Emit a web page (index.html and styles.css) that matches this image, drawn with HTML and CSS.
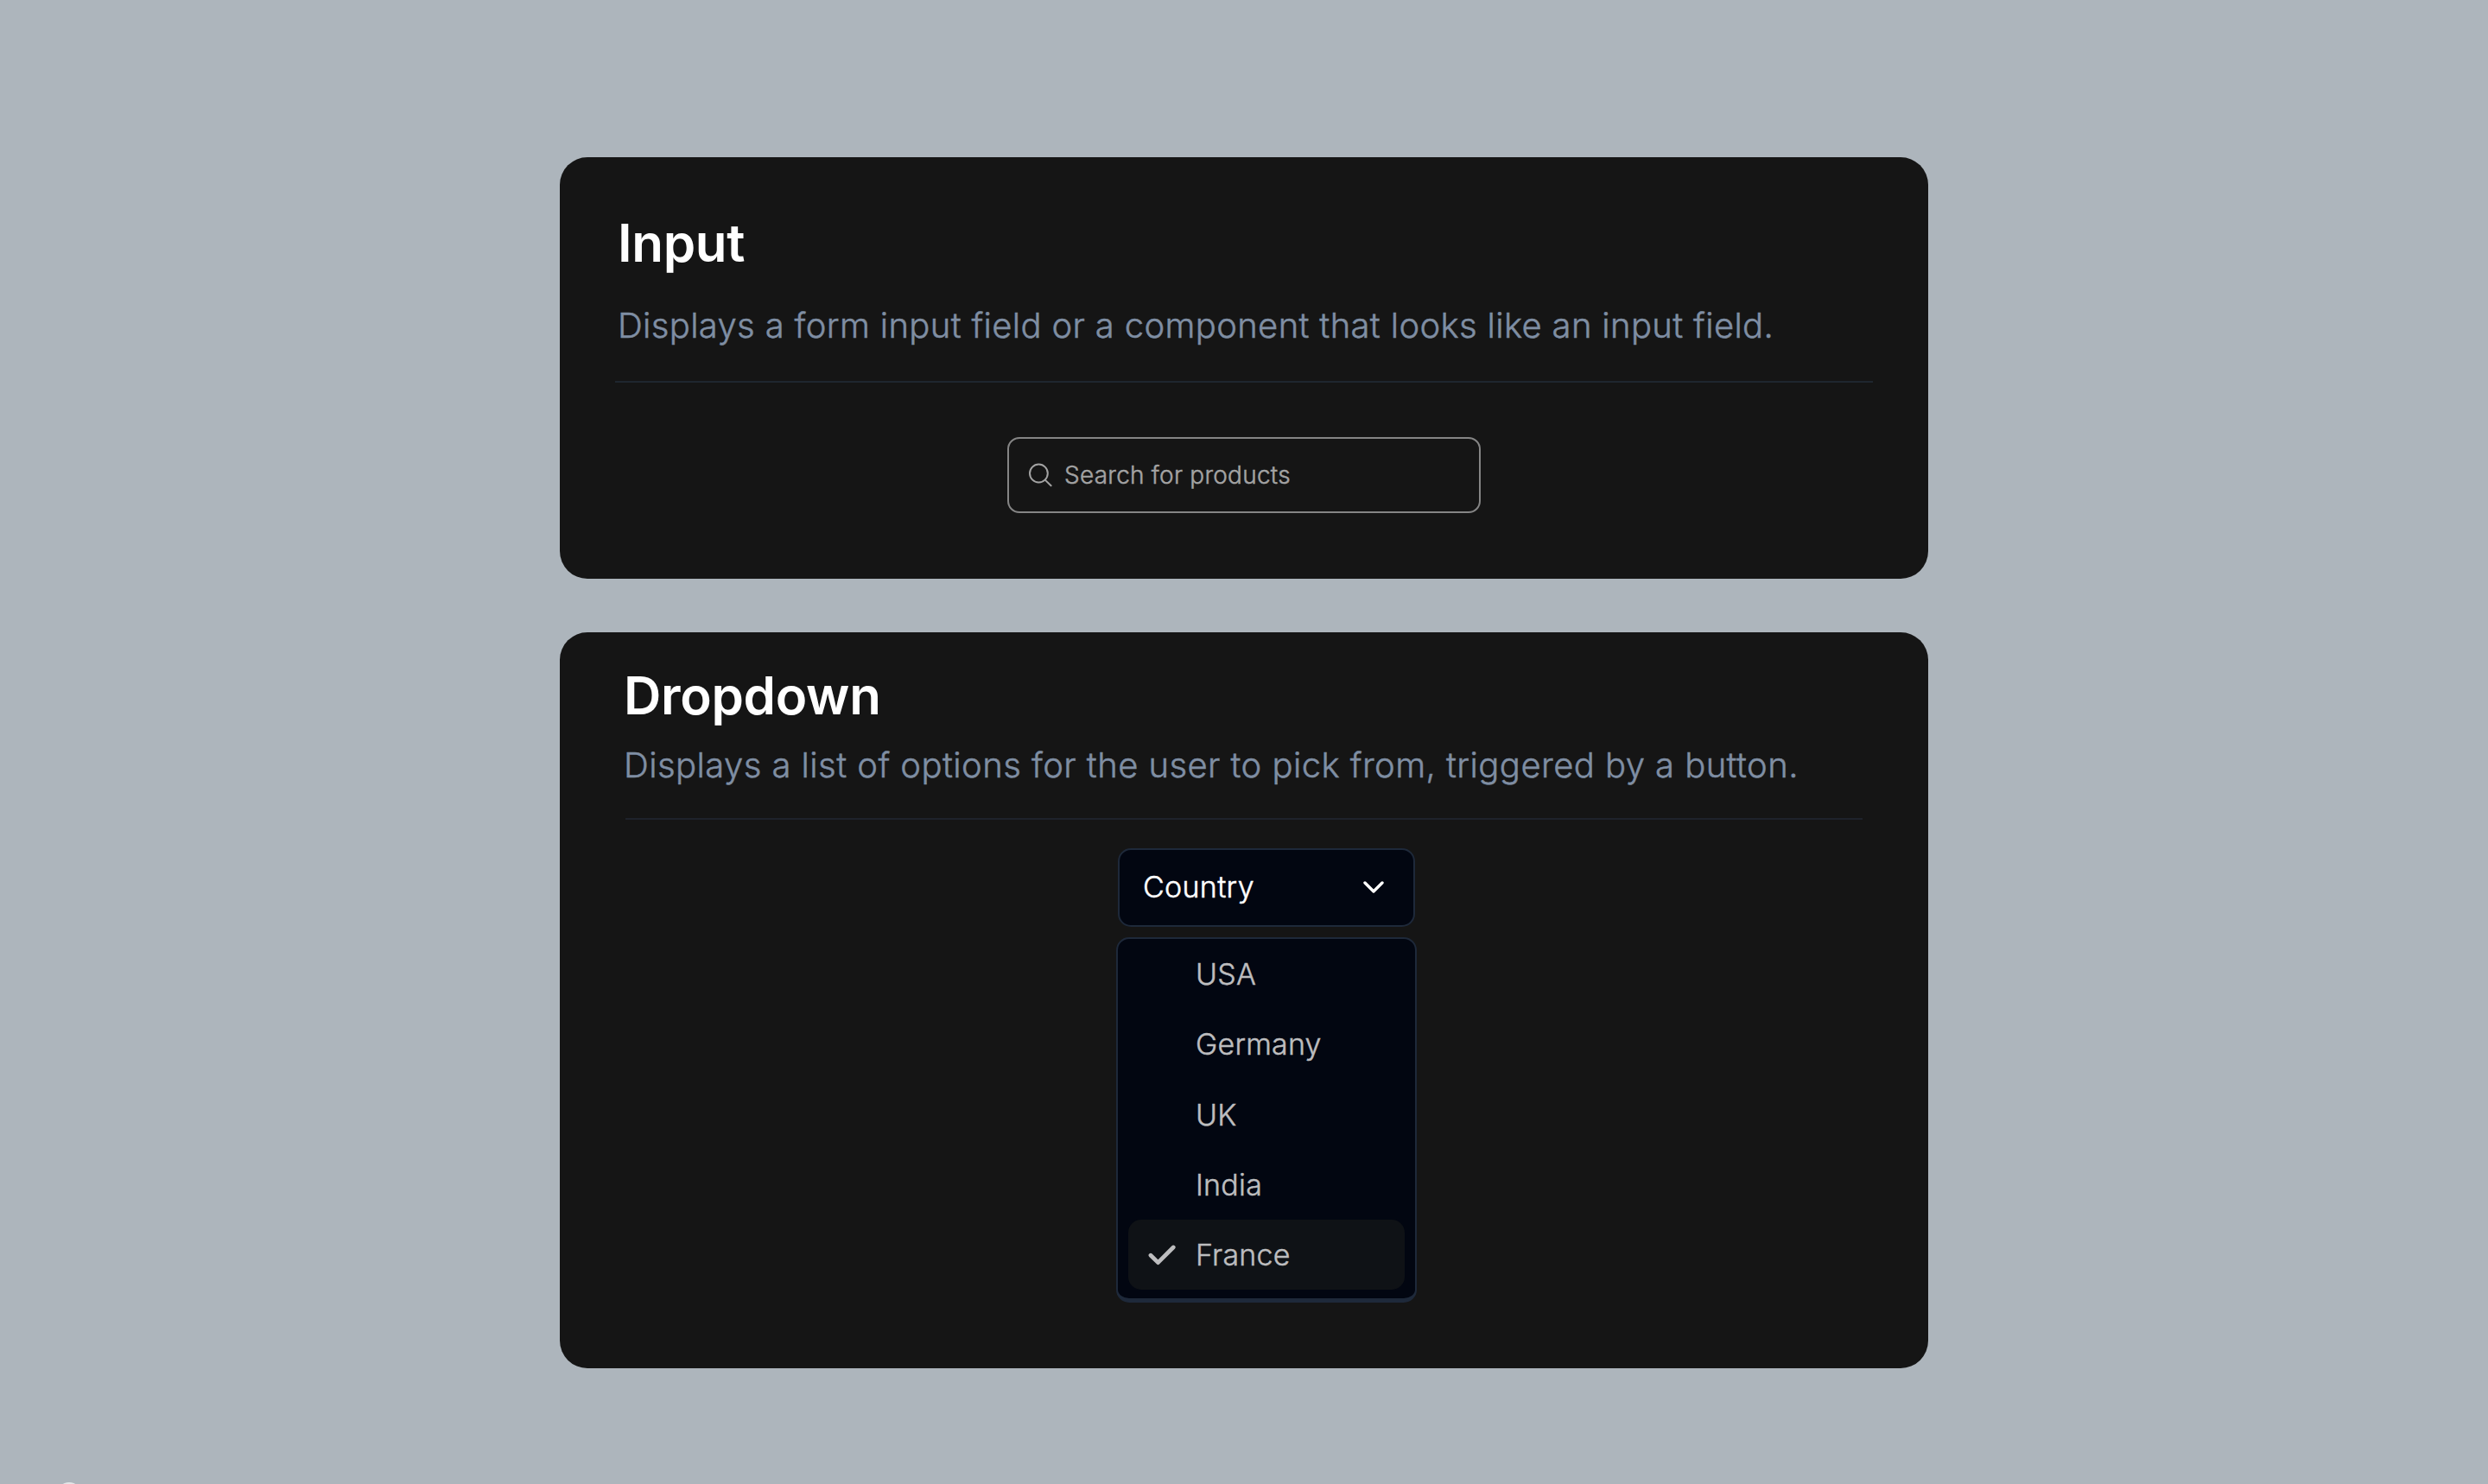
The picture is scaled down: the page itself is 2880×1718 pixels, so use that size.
FILE: index.html
```html
<!DOCTYPE html>
<html lang="en">

<head>
  <meta charset="UTF-8">
  <meta name="viewport" content="width=device-width, initial-scale=1.0">
  <title>Components</title>
  <link rel="stylesheet" href="styles.css">
</head>

<body>
  <div class="container">
    <section class="card card-input">
      <h2>Input</h2>
      <p>Displays a form input field or a component that looks like an input field.</p>
      <hr>
      <label class="search">
        <svg class="search-icon" viewBox="0 0 28 28" fill="none" stroke="currentColor" stroke-width="2" stroke-linecap="round">
          <circle cx="12.4" cy="12" r="10.4" />
          <path d="M19.8 19.6L26.6 26.2" />
        </svg>
        <input type="text" placeholder="Search for products">
      </label>
    </section>

    <section class="card card-dropdown">
      <h2>Dropdown</h2>
      <p>Displays a list of options for the user to pick from, triggered by a button.</p>
      <hr>
      <div class="dropdown">
        <button type="button" class="trigger">
          <span>Country</span>
          <svg class="chevron" viewBox="0 0 24 14" fill="none" stroke="currentColor" stroke-width="3.4" stroke-linecap="round" stroke-linejoin="round">
            <path d="M2 2L12 12L22 2" />
          </svg>
        </button>
        <ul class="menu">
          <li>USA</li>
          <li>Germany</li>
          <li>UK</li>
          <li>India</li>
          <li class="selected">
            <svg class="check" viewBox="0 0 32 24" fill="none" stroke="currentColor" stroke-width="4.8" stroke-linecap="round" stroke-linejoin="round">
              <path d="M3 12.2L11.5 20.6L29.2 3" />
            </svg>
            France
          </li>
        </ul>
      </div>
    </section>
  </div>
  <span class="dot"></span>
</body>

</html>
```
FILE: styles.css
```css
* {
  box-sizing: border-box;
  margin: 0;
  padding: 0;
}

body {
  background-color: #adb5bc;
  font-family: Inter, sans-serif;
  height: 1718px;
  overflow: hidden;
}

.container {
  width: 1584px;
  margin: 0 auto;
  padding-top: 182px;
  display: flex;
  flex-direction: column;
  gap: 62px;
}

.card {
  background-color: #151515;
  border-radius: 32px;
}

.card-input {
  height: 488px;
  padding: 63px 64px 0;
}

.card-dropdown {
  height: 852px;
  padding: 37px 76px 0;
}

h2 {
  color: #fff;
  font-size: 60px;
  font-weight: 600;
  line-height: 72px;
  letter-spacing: -0.3px;
}

/* light weight, slightly thickened */
p,
.search input,
.trigger,
.menu {
  -webkit-text-stroke: 0.5px;
}

p {
  color: #7f8ea3;
  font-size: 40px;
  font-weight: 300;
  line-height: 56px;
  letter-spacing: 0.34px;
  white-space: nowrap;
}

hr {
  border: 0;
  height: 2px;
  background-color: #1f262f;
}

.card-input h2,
.card-input p {
  padding-left: 3px;
}

.card-input p {
  margin-top: 32px;
}

.card-input hr {
  margin-top: 36px;
}

.card-dropdown h2,
.card-dropdown p {
  margin-left: -2px;
}

.card-dropdown p {
  margin-top: 17px;
  letter-spacing: 0.43px;
}

.card-dropdown hr {
  margin-top: 33px;
  background-color: #1e222b;
}

.search {
  display: flex;
  align-items: center;
  gap: 14px;
  width: 548px;
  height: 88px;
  margin: 63px auto 0;
  padding: 0 22px;
  border: 2px solid #858585;
  border-radius: 14px;
  color: #a3a3a3;
}

.search-icon {
  width: 28px;
  height: 28px;
}

.search input {
  flex: 1;
  min-width: 0;
  border: 0;
  outline: 0;
  background: none;
  color: inherit;
  font: 300 28px Inter, sans-serif;
  letter-spacing: 0.24px;
}

.search input::placeholder {
  color: #a3a3a3;
  opacity: 1;
}

.dropdown {
  width: 348px;
  margin: 33px 0 0 568px;
}

.trigger {
  display: flex;
  align-items: center;
  justify-content: space-between;
  width: 344px;
  height: 91px;
  margin: 0 auto;
  padding: 0 34px 2px 27px;
  background-color: #020611;
  border: 2px solid #1e293a;
  border-radius: 15px;
  color: #fff;
  font: 300 34px Inter, sans-serif;
  letter-spacing: 0.3px;
}

.chevron {
  width: 24px;
  height: 14px;
}

.menu {
  height: 423px;
  margin-top: 12px;
  padding: 0 10px;
  background-color: #020611;
  border: 2px solid #1e293a;
  border-bottom-width: 5px;
  border-radius: 15px;
  list-style: none;
}

.menu li {
  display: flex;
  align-items: center;
  height: 81.25px;
  padding-left: 80px;
  border-radius: 15px;
  color: #bdbdbf;
  font-size: 34px;
  font-weight: 300;
  letter-spacing: 0.2px;
}

.menu .selected {
  gap: 23px;
  margin: 0 2px;
  padding-left: 23px;
  background-color: #0f1216;
}

.check {
  width: 32px;
  height: 24px;
}

/* floating bubble peeking in at the bottom edge */
.dot {
  position: fixed;
  left: 66px;
  bottom: -26px;
  width: 28px;
  height: 28px;
  border-radius: 50%;
  background-color: #e3e6e8;
}
```
